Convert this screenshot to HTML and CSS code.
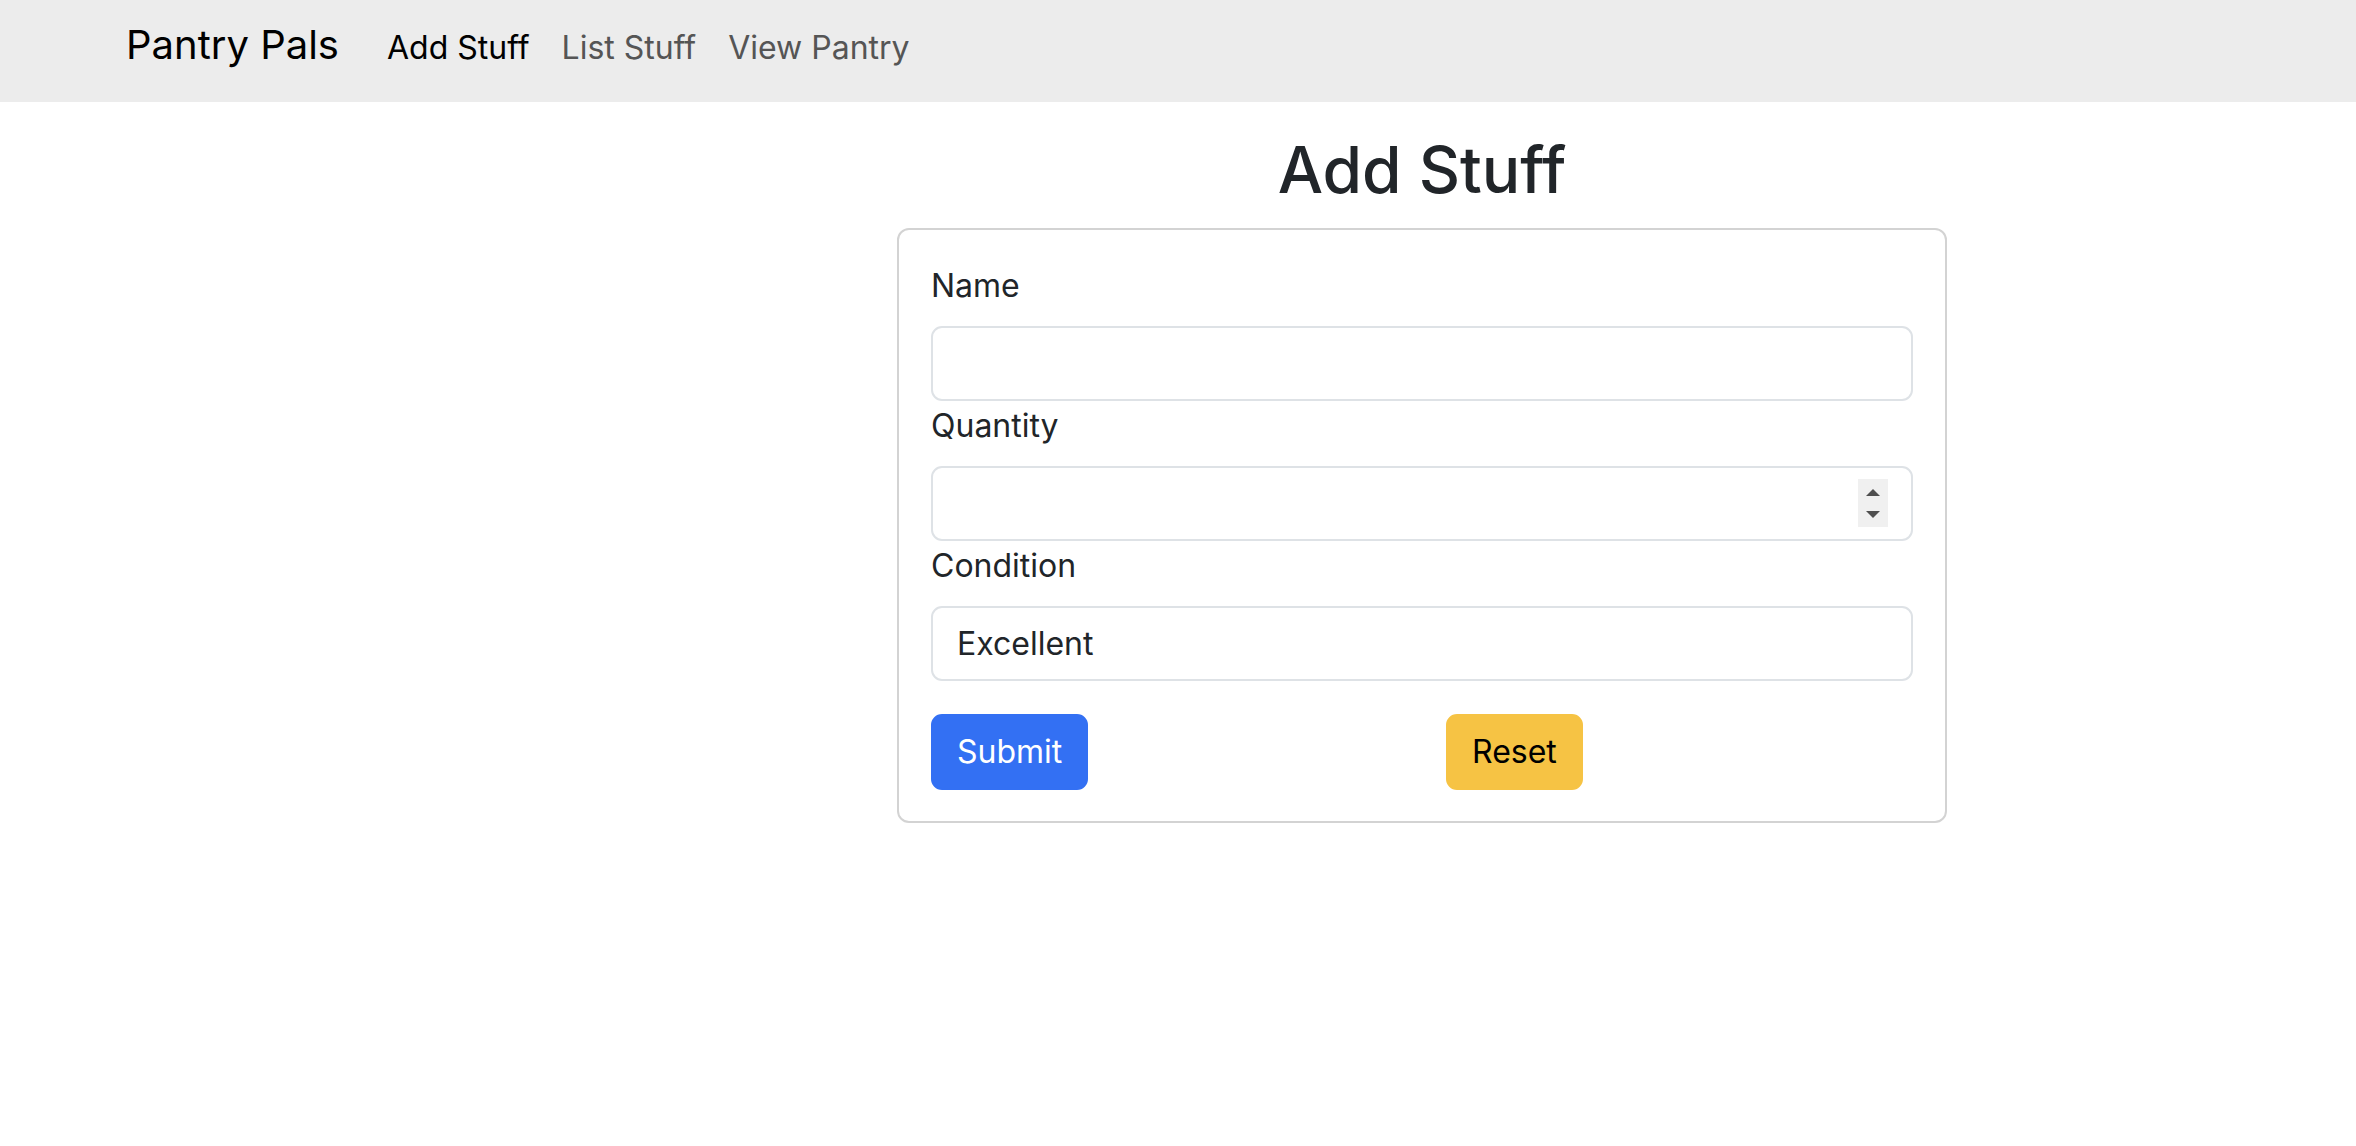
FILE: index.html
```html
<!DOCTYPE html>
<html lang="en">
<head>
<meta charset="utf-8">
<title>Pantry Pals</title>
<link rel="stylesheet" href="styles.css">
</head>
<body>
<nav class="navbar">
  <a class="brand" href="#">Pantry Pals</a>
  <ul class="nav">
    <li><a class="nav-link active" href="#">Add Stuff</a></li>
    <li><a class="nav-link" href="#">List Stuff</a></li>
    <li><a class="nav-link" href="#">View Pantry</a></li>
  </ul>
</nav>
<main class="content">
  <h2 class="title">Add Stuff</h2>
  <form class="card">
    <div class="field">
      <label class="label" for="name">Name</label>
      <input class="input" id="name" type="text">
    </div>
    <div class="field">
      <label class="label" for="qty">Quantity</label>
      <div class="number-wrap">
        <input class="input" id="qty" type="text">
        <span class="spinner"><span class="arrow up"></span><span class="arrow down"></span></span>
      </div>
    </div>
    <div class="field">
      <label class="label" for="cond">Condition</label>
      <input class="input" id="cond" type="text" value="Excellent">
    </div>
    <div class="buttons">
      <div><button class="btn btn-primary" type="button">Submit</button></div>
      <div><button class="btn btn-warning" type="button">Reset</button></div>
    </div>
  </form>
</main>
</body>
</html>
```
FILE: styles.css
```css
* { box-sizing: border-box; }
html, body { margin: 0; padding: 0; background: #fff; }
body {
  font-family: Inter, "Noto Sans", "Liberation Sans", sans-serif;
  color: #212529;
  font-size: 32px;
  line-height: 48px;
}
.navbar {
  height: 102px;
  background: #ececec;
  display: flex;
  align-items: baseline;
  padding: 15px 0 0 126px;
}
.brand {
  font-size: 40px;
  line-height: 60px;
  color: #000;
  text-decoration: none;
  margin-right: 32px;
}
.nav {
  list-style: none;
  margin: 0;
  padding: 0;
  display: flex;
  align-items: baseline;
}
.nav-link {
  display: block;
  padding: 0 16px;
  font-size: 32px;
  line-height: 48px;
  color: #555;
  text-decoration: none;
}
.nav-link.active { color: #000; }
.content {
  width: 1050px;
  margin-left: 897px;
}
.title {
  margin: 30px 0 20px;
  font-size: 64px;
  line-height: 76px;
  font-weight: 500;
  text-align: center;
}
.card {
  border: 2px solid #d3d3d3;
  border-radius: 12px;
  padding: 31px 32px 31px;
  margin: 0;
}
.field { display: flex; flex-direction: column; }
.label {
  display: block;
  line-height: 48px;
  padding-top: 1px;
  margin-bottom: 16px;
}
.input {
  display: block;
  width: 100%;
  height: 75px;
  border: 2px solid #dee2e6;
  border-radius: 11px;
  padding: 0 24px;
  font-family: inherit;
  font-size: 32px;
  color: #212529;
  background: #fff;
  outline: none;
}
.number-wrap { position: relative; }
.spinner {
  position: absolute;
  right: 25px;
  top: 13px;
  width: 30px;
  height: 48px;
  background: #f0f0f0;
  display: flex;
  flex-direction: column;
  align-items: center;
  justify-content: center;
  gap: 15px;
}
.arrow {
  width: 0;
  height: 0;
  border-left: 7px solid transparent;
  border-right: 7px solid transparent;
}
.arrow.up { border-bottom: 7px solid #4f4f4f; }
.arrow.down { border-top: 7px solid #4f4f4f; }
.buttons {
  display: grid;
  grid-template-columns: 1fr 1fr;
  column-gap: 48px;
  margin-top: 33px;
}
.btn {
  font-family: inherit;
  font-size: 32px;
  line-height: 48px;
  padding: 12px 24px;
  border: 2px solid transparent;
  border-radius: 11px;
  cursor: pointer;
}
.btn-primary { background: #3370f3; border-color: #3370f3; color: #fff; }
.btn-warning { background: #f6c344; border-color: #f6c344; color: #000; }
```
